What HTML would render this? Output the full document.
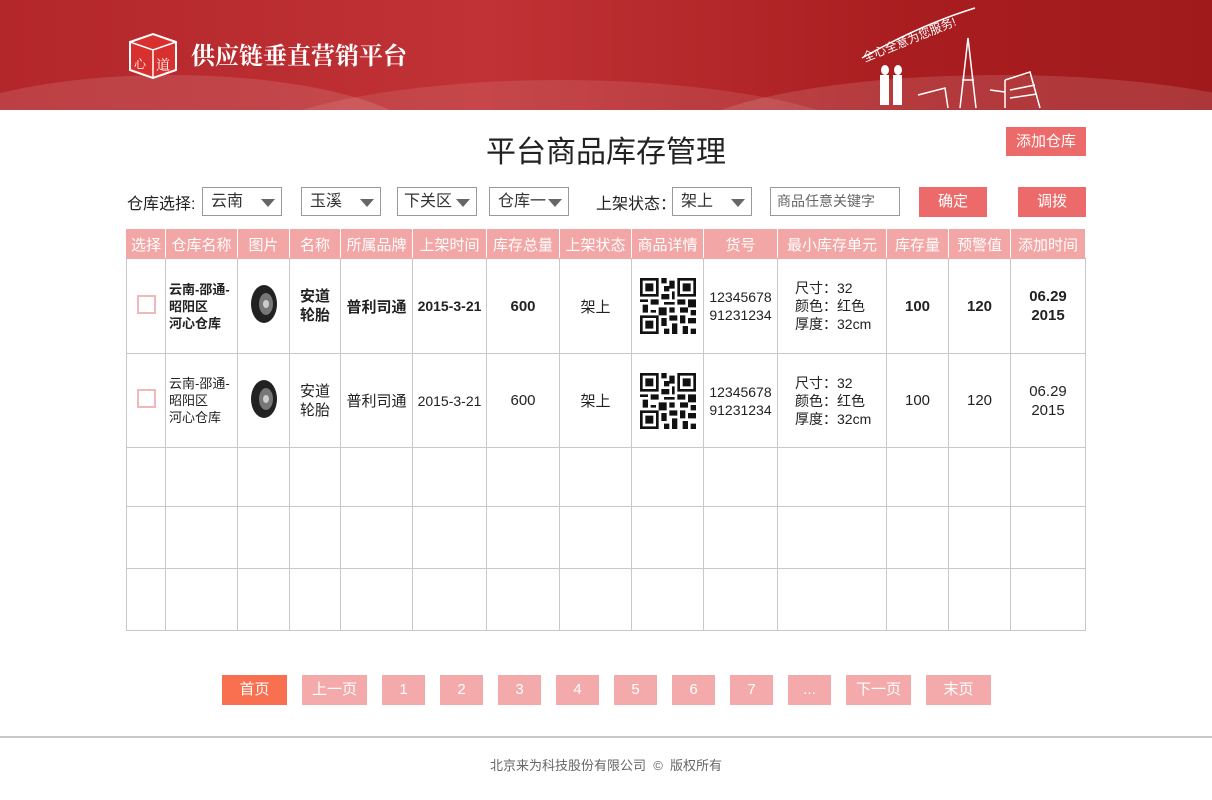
<!DOCTYPE html>
<html><head><meta charset="utf-8"><style>
*{margin:0;padding:0;box-sizing:border-box}
body{width:1212px;height:800px;background:#fff;font-family:"Liberation Sans","Noto Sans CJK SC",sans-serif;position:relative;overflow:hidden;color:#222}
.a{position:absolute}
.hdr{left:0;top:0;width:1212px;height:110px;background:linear-gradient(90deg,#b3262a,#c03235 40%,#a91d20 75%,#a01a1c);overflow:hidden}
.sel{border:1px solid #999;height:29px;top:187px;font-size:16px;line-height:27px;padding-left:8px;color:#333;background:#fff}
.sel.ar:after{content:"";position:absolute;right:6px;top:11px;border-left:7px solid transparent;border-right:7px solid transparent;border-top:8px solid #666}
.btn{background:#ec6a6a;color:#fff;text-align:center;font-size:15px}
table{border-collapse:collapse;position:absolute;left:126px;top:229px;width:960px;table-layout:fixed}
td,th{border:1px solid #c8c8c8;text-align:center;font-size:15px}
th{background:#f3a6a6;color:#fff;font-weight:normal;height:29px;border-color:#f3a6a6;border-right:1px solid #fff;font-size:15px;white-space:nowrap;overflow:hidden}
.cb{display:inline-block;width:19px;height:19px;border:2px solid #f0b8b8}
.pg{top:675px;height:30px;background:#f4aaaa;color:#fff;text-align:center;line-height:30px;font-size:15px}
.qr{display:inline-block;width:56px;height:56px;vertical-align:middle}
</style></head><body>
<svg width="0" height="0" style="position:absolute"><defs><g id="q"><rect width="21" height="21" fill="#fff"/><path fill="#111" d="M0 0h7v7H0zM14 0h7v7h-7zM0 14h7v7H0z"/><path fill="#fff" d="M1 1h5v5H1zM15 1h5v5h-5zM1 15h5v5H1z"/><path fill="#111" d="M2 2h3v3H2zM16 2h3v3h-3zM2 16h3v3H2zM8 0h2v2H8zM11 1h2v3h-2zM9 3h2v2H9zM8 6h3v2H8zM12 5h1v3h-1zM0 8h3v1H0zM4 8h3v2H4zM9 9h4v1H9zM14 8h3v2h-3zM18 8h3v3h-3zM1 10h2v3H1zM7 11h3v3H7zM11 11h2v2h-2zM15 11h3v2h-3zM19 12h2v2h-2zM4 12h2v1H4zM8 15h2v3H8zM11 14h3v2h-3zM15 14h2v3h-2zM18 15h3v2h-3zM12 17h2v4h-2zM9 19h2v2H9zM16 18h2v3h-2zM19 19h2v2h-2z"/></g></defs></svg>
<div class="a hdr">
<svg width="1212" height="110" class="a" style="left:0;top:0">
<ellipse cx="170" cy="150" rx="260" ry="75" fill="rgba(255,255,255,0.12)"/>
<ellipse cx="560" cy="160" rx="330" ry="80" fill="rgba(255,255,255,0.10)"/>
<ellipse cx="1000" cy="150" rx="330" ry="75" fill="rgba(255,255,255,0.13)"/>
<g stroke="#fff" stroke-width="1.5" fill="none">
<path d="M862 58 Q920 25 975 8"/>
<path d="M968 38 L960 108 M968 38 L976 108 M962 80 L974 80"/>
<path d="M1005 80 L1030 72 L1040 108 M1005 80 L1005 108 M1010 90 L1035 85 M1010 98 L1037 94"/>
<path d="M918 95 L945 88 L948 108 M990 90 L1005 92"/>
</g>
<g fill="#fff"><ellipse cx="885" cy="70" rx="4" ry="5"/><rect x="880" y="75" width="9" height="30"/><ellipse cx="898" cy="70" rx="4" ry="5"/><rect x="893" y="75" width="9" height="30"/></g>
<g transform="translate(128,32)"><path d="M2 10 L25 2 L48 10 L48 38 L25 46 L2 38 Z" fill="#d8302e" stroke="#fff" stroke-width="2"/><path d="M2 10 L25 18 L48 10 M25 18 L25 46" stroke="#fff" stroke-width="1.5" fill="none"/><text x="28" y="38" font-size="14" fill="#fff" font-family="Noto Serif CJK SC,serif">道</text><text x="6" y="36" font-size="12" fill="#fff" font-family="Noto Serif CJK SC,serif">心</text></g>
</svg>
<div class="a" style="left:191px;top:36px;font-size:24px;font-weight:bold;color:#fff;font-family:'Noto Serif CJK SC',serif">供应链垂直营销平台</div>
<div class="a" style="left:860px;top:50px;font-size:12px;color:#fff;transform:rotate(-22deg);transform-origin:left top">全心全意为您服务!</div>
</div>
<div class="a" style="left:0;top:127px;width:1212px;text-align:center;font-size:30px;color:#222">平台商品库存管理</div>
<div class="a btn" style="left:1006px;top:127px;width:80px;height:29px;line-height:29px">添加仓库</div>
<div class="a" style="left:127px;top:190px;font-size:16px">仓库选择:</div>
<div class="a sel ar" style="left:202px;width:80px">云南</div>
<div class="a sel ar" style="left:301px;width:80px">玉溪</div>
<div class="a sel ar" style="left:397px;width:80px;padding-left:6px">下关区</div>
<div class="a sel ar" style="left:489px;width:80px;padding-left:8px">仓库一</div>
<div class="a" style="left:596px;top:190px;font-size:16px">上架状态：</div>
<div class="a sel ar" style="left:672px;width:80px">架上</div>
<div class="a sel" style="left:770px;width:130px;font-size:14px;color:#666;padding-left:6px">商品任意关键字</div>
<div class="a btn" style="left:919px;top:187px;width:68px;height:30px;line-height:30px">确定</div>
<div class="a btn" style="left:1018px;top:187px;width:68px;height:30px;line-height:30px">调拨</div>
<table>
<colgroup><col style="width:39px"><col style="width:72px"><col style="width:52px"><col style="width:51px"><col style="width:72px"><col style="width:74px"><col style="width:73px"><col style="width:72px"><col style="width:72px"><col style="width:74px"><col style="width:109px"><col style="width:62px"><col style="width:62px"><col style="width:75px"></colgroup>
<tr><th>选择</th><th>仓库名称</th><th>图片</th><th>名称</th><th>所属品牌</th><th>上架时间</th><th>库存总量</th><th>上架状态</th><th>商品详情</th><th>货号</th><th>最小库存单元</th><th>库存量</th><th>预警值</th><th>添加时间</th></tr>
<tr style="height:95px;font-weight:bold"><td><span class="cb"></span></td><td style="text-align:left;padding-left:3px;font-size:13px;line-height:17px">云南-邵通-<br>昭阳区<br>河心仓库</td><td><svg width="32" height="42"><ellipse cx="16" cy="21" rx="13" ry="19" fill="#222"/><ellipse cx="18" cy="21" rx="7" ry="11" fill="#777"/><ellipse cx="18" cy="21" rx="3" ry="4" fill="#ccc"/></svg></td><td style="line-height:19px">安道<br>轮胎</td><td>普利司通</td><td style="font-size:14px">2015-3-21</td><td>600</td><td style="font-weight:normal">架上</td><td><svg class="qr" viewBox="0 0 21 21"><use href="#q"/></svg></td><td style="font-weight:normal;font-size:14px;line-height:18px">12345678<br>91231234</td><td style="font-weight:normal;font-size:14px;text-align:left;padding-left:17px;line-height:18px">尺寸：32<br>颜色：红色<br>厚度：32cm</td><td>100</td><td>120</td><td style="line-height:19px">06.29<br>2015</td></tr>
<tr style="height:94px"><td><span class="cb"></span></td><td style="text-align:left;padding-left:3px;font-size:13px;line-height:17px">云南-邵通-<br>昭阳区<br>河心仓库</td><td><svg width="32" height="42"><ellipse cx="16" cy="21" rx="13" ry="19" fill="#222"/><ellipse cx="18" cy="21" rx="7" ry="11" fill="#777"/><ellipse cx="18" cy="21" rx="3" ry="4" fill="#ccc"/></svg></td><td style="line-height:19px">安道<br>轮胎</td><td>普利司通</td><td style="font-size:14px">2015-3-21</td><td>600</td><td>架上</td><td><svg class="qr" viewBox="0 0 21 21"><use href="#q"/></svg></td><td style="font-size:14px;line-height:18px">12345678<br>91231234</td><td style="font-size:14px;text-align:left;padding-left:17px;line-height:18px">尺寸：32<br>颜色：红色<br>厚度：32cm</td><td>100</td><td>120</td><td style="line-height:19px">06.29<br>2015</td></tr>
<tr style="height:59px"><td></td><td></td><td></td><td></td><td></td><td></td><td></td><td></td><td></td><td></td><td></td><td></td><td></td><td></td></tr>
<tr style="height:62px"><td></td><td></td><td></td><td></td><td></td><td></td><td></td><td></td><td></td><td></td><td></td><td></td><td></td><td></td></tr>
<tr style="height:62px"><td></td><td></td><td></td><td></td><td></td><td></td><td></td><td></td><td></td><td></td><td></td><td></td><td></td><td></td></tr>
</table>
<div class="a pg" style="left:222px;width:65px;background:#f8704f">首页</div>
<div class="a pg" style="left:302px;width:65px">上一页</div>
<div class="a pg" style="left:382px;width:43px">1</div>
<div class="a pg" style="left:440px;width:43px">2</div>
<div class="a pg" style="left:498px;width:43px">3</div>
<div class="a pg" style="left:556px;width:43px">4</div>
<div class="a pg" style="left:614px;width:43px">5</div>
<div class="a pg" style="left:672px;width:43px">6</div>
<div class="a pg" style="left:730px;width:43px">7</div>
<div class="a pg" style="left:788px;width:43px">...</div>
<div class="a pg" style="left:846px;width:65px">下一页</div>
<div class="a pg" style="left:926px;width:65px">末页</div>
<div class="a" style="left:0;top:736px;width:1212px;height:2px;background:#c8c8c8"></div>
<div class="a" style="left:0;top:755px;width:1212px;text-align:center;font-size:13px;color:#666">北京来为科技股份有限公司 &nbsp;© &nbsp;版权所有</div>
</body></html>
